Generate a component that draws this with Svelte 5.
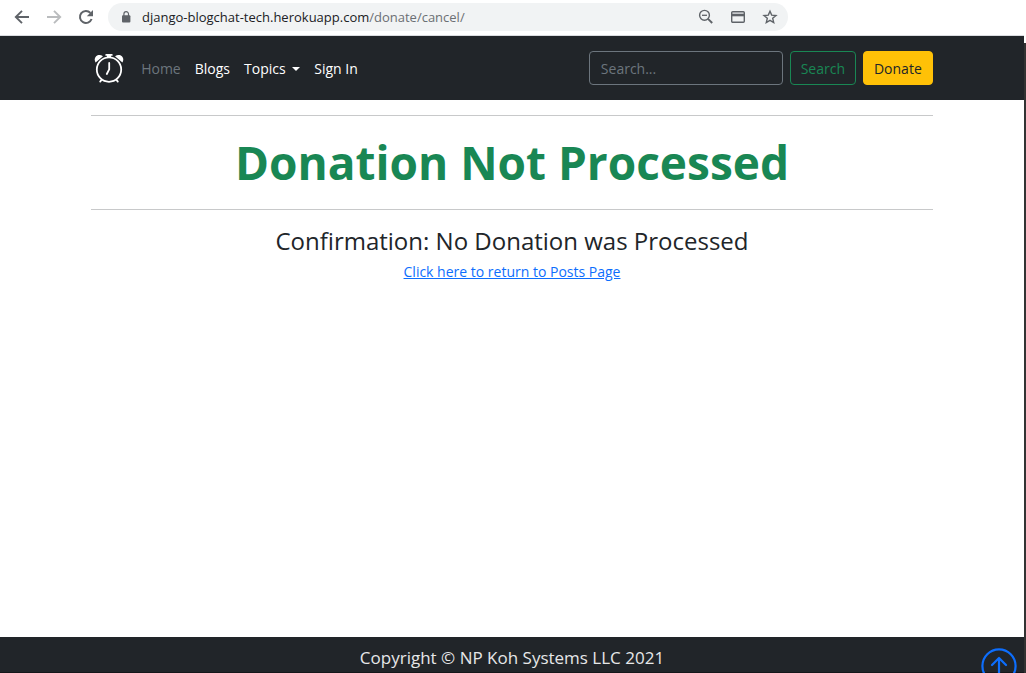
<script>
  const host = 'django-blogchat-tech.herokuapp.com';
  const path = '/donate/cancel/';
  let query = $state('');
</script>

<div class="window">
  <div class="view">
    <div class="toolbar">
      <button class="tool" aria-label="Back">
        <svg viewBox="0 0 16 16" width="16" height="16"><path d="M15 8H2M8 1.8L1.8 8L8 14.2" fill="none" stroke="#5f6368" stroke-width="1.9" /></svg>
      </button>
      <button class="tool" aria-label="Forward" disabled>
        <svg viewBox="0 0 16 16" width="16" height="16"><path d="M1 8H14M8 1.8L14.2 8L8 14.2" fill="none" stroke="#babcbe" stroke-width="1.9" /></svg>
      </button>
      <button class="tool" aria-label="Reload">
        <svg viewBox="0 0 16 16" width="16" height="16"><path d="M13.6 10A6 6 0 1 1 12.4 3.9" fill="none" stroke="#5f6368" stroke-width="2" /><path d="M15 1V7.2H8.8Z" fill="#5f6368" /></svg>
      </button>
      <div class="address">
        <svg viewBox="0 0 10 12" width="10" height="12"><rect x="1" y="4.2" width="8.4" height="7.4" rx="1" fill="#5f6368" /><path d="M2.9 5V3a2.3 2.3 0 0 1 4.6 0V5" fill="none" stroke="#5f6368" stroke-width="1.2" /></svg>
        <span class="url">{host}<span class="path">{path}</span></span>
        <button class="tool" aria-label="Zoom">
          <svg viewBox="0 0 16 16" width="16" height="16" fill="none" stroke="#5f6368"><circle cx="6.5" cy="6.3" r="4.9" stroke-width="1.4" /><path d="M4 6.3H9" stroke-width="1.3" /><path d="M10 9.8L14.2 14" stroke-width="1.9" /></svg>
        </button>
        <button class="tool" aria-label="Payment methods">
          <svg viewBox="0 0 16 16" width="16" height="16"><rect x="1.7" y="2.7" width="12.6" height="10.6" rx="1" fill="none" stroke="#5f6368" stroke-width="1.4" /><path d="M1.5 6H14.5" stroke="#5f6368" stroke-width="2.6" /></svg>
        </button>
        <button class="tool" aria-label="Bookmark this page">
          <svg viewBox="0 0 16 16" width="16" height="16"><path d="M8 2.2L9.7 6.1L14 6.5L10.7 9.3L11.7 13.5L8 11.3L4.3 13.5L5.3 9.3L2 6.5L6.3 6.1Z" fill="none" stroke="#5f6368" stroke-width="1.4" /></svg>
        </button>
      </div>
    </div>

    <header class="navbar">
      <div class="container bar">
        <a class="brand" href="#home" aria-label="Home page">
          <svg viewBox="0 0 32 32" width="32" height="32" fill="none" stroke="#fff" stroke-linecap="round">
            <circle cx="16" cy="17.6" r="12.2" stroke-width="1.8" />
            <path d="M16.2 11V17.4L13.8 22" stroke-width="1.8" />
            <path d="M16 3V6" stroke-width="4" stroke-linecap="butt" />
            <path d="M13.2 2.9H18.8" stroke-width="1.8" />
            <path d="M8.4 28L7.2 29.6M23.6 28L24.8 29.6" stroke-width="1.8" />
            <path d="M2.6 10.4C-.4 5.6 5 .6 10 4.2Z" fill="#fff" stroke="none" />
            <path d="M29.4 10.4C32.4 5.6 27 .6 22 4.2Z" fill="#fff" stroke="none" />
          </svg>
        </a>
        <nav>
          <a class="muted" href="#home">Home</a>
          <a href="#blogs">Blogs</a>
          <a href="#topics">Topics <i class="caret"></i></a>
          <a href="#signin">Sign In</a>
        </nav>
        <form onsubmit={(e) => e.preventDefault()}>
          <input type="search" placeholder="Search..." aria-label="Search" bind:value={query} />
          <button class="btn outline">Search</button>
          <button class="btn donate" type="button">Donate</button>
        </form>
      </div>
    </header>

    <main class="container">
      <hr />
      <h1>Donation Not Processed</h1>
      <hr />
      <h2>Confirmation: No Donation was Processed</h2>
      <a class="return" href="#posts">Click here to return to Posts Page</a>
    </main>

    <footer>Copyright © NP Koh Systems LLC 2021</footer>
    <a class="top" href="#top" aria-label="Back to top">
      <svg viewBox="0 0 36 36" width="36" height="36" fill="none" stroke="#0d6efd" stroke-width="2.2" stroke-linecap="round" stroke-linejoin="round"><circle cx="18" cy="18" r="16.6" /><path d="M18 26.5V10.2M11 17L18 10L25 17" /></svg>
    </a>
  </div>
  <div class="edge"></div>
</div>

<style>
  :global(body) {
    margin: 0;
    background: #fff;
  }
  * {
    box-sizing: border-box;
  }
  .window {
    display: flex;
    min-height: 100vh;
    font: 14px/20px "Segoe UI", "Open Sans", "Noto Sans", sans-serif;
    color: #212529;
  }
  .view {
    position: relative;
    flex: 1;
    min-width: 0;
    display: flex;
    flex-direction: column;
    overflow: hidden;
  }
  .edge {
    width: 2px;
    margin-top: 43px;
    background: #333;
  }
  svg {
    display: block;
    flex: none;
  }
  button {
    font: inherit;
    cursor: pointer;
  }
  .toolbar {
    display: flex;
    align-items: center;
    gap: 16px;
    height: 36px;
    padding: 0 14px 2px;
    border-bottom: 1px solid #dadce0;
  }
  .tool {
    padding: 0;
    border: 0;
    background: none;
  }
  .address {
    display: flex;
    align-items: center;
    gap: 16px;
    flex: 0 1 680px;
    height: 28px;
    margin-left: -2px;
    padding: 0 10px 0 13px;
    border-radius: 14px;
    background: #f1f3f4;
  }
  .url {
    flex: 1;
    margin-left: -5px;
    color: #202124;
    font-size: 13px;
  }
  .path {
    color: #6b6f73;
  }
  .container {
    width: 82.2%;
    margin: 0 auto;
  }
  .navbar {
    padding: 15px 0;
    background: #212529;
  }
  .bar {
    display: flex;
    align-items: center;
    height: 34px;
  }
  .brand {
    margin: 0 16px 0 2px;
  }
  nav {
    display: flex;
    flex: 1;
    gap: 14px;
    padding-top: 2px;
  }
  nav a {
    color: #fff;
    text-decoration: none;
    white-space: nowrap;
  }
  nav .muted {
    color: #6c757d;
  }
  .caret {
    display: inline-block;
    margin-left: 3px;
    vertical-align: 3px;
    border: 4px solid transparent;
    border-top-color: #fff;
    border-bottom: 0;
  }
  form {
    display: flex;
    gap: 7px;
  }
  input {
    width: 194px;
    height: 34px;
    padding: 0 11px;
    border: 1px solid #6c757d;
    border-radius: 4px;
    background: #212529;
    color: #fff;
    font: inherit;
  }
  input::placeholder {
    color: #6c757d;
    opacity: 1;
  }
  .btn {
    height: 34px;
    padding: 2px 0 0;
    border: 1px solid;
    border-radius: 4px;
  }
  .outline {
    width: 66px;
    border-color: #198754;
    background: none;
    color: #198754;
  }
  .donate {
    width: 70px;
    border-color: #ffc107;
    background: #ffc107;
    color: #212529;
  }
  main {
    flex: 1;
    text-align: center;
  }
  hr {
    height: 1px;
    margin: 15px 0;
    border: 0;
    background: #c8c9ca;
  }
  h1 {
    margin: 0;
    padding: 2px 0 3px;
    font-size: 46px;
    line-height: 58px;
    font-weight: 700;
    color: #198754;
  }
  h2 {
    margin: 0 0 6px;
    font-size: 24px;
    line-height: 31px;
    font-weight: 500;
  }
  .return {
    color: #0d6efd;
  }
  footer {
    height: 36px;
    padding-top: 8px;
    border-bottom: 1px solid #15171a;
    background: #212529;
    color: #e6e7e8;
    font-size: 17px;
    line-height: 26px;
    text-align: center;
  }
  .top {
    position: absolute;
    right: 7px;
    bottom: -11px;
  }
</style>
